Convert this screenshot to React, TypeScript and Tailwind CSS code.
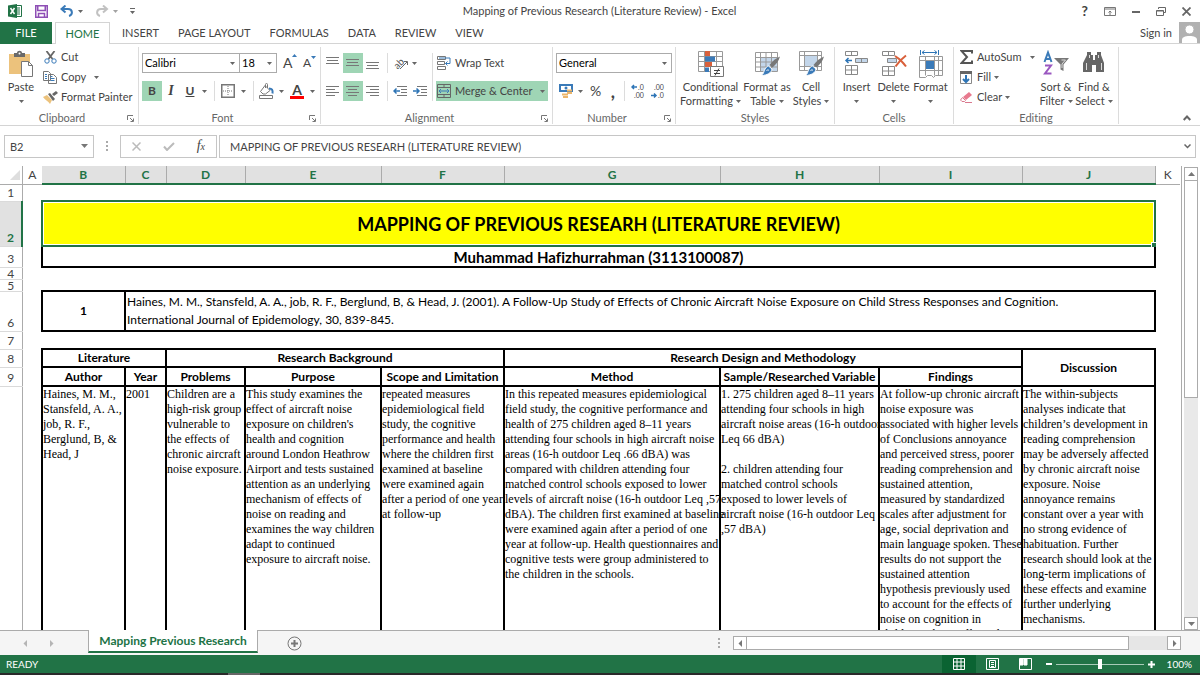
import type { ReactNode } from 'react'
import { clsx } from 'clsx'

const tabs = ['INSERT', 'PAGE LAYOUT', 'FORMULAS', 'DATA', 'REVIEW', 'VIEW']

const columns = [
  { name: 'A', width: 'w-[20px]' },
  { name: 'B', width: 'w-[83px]' },
  { name: 'C', width: 'w-[41px]' },
  { name: 'D', width: 'w-[79px]' },
  { name: 'E', width: 'w-[136px]' },
  { name: 'F', width: 'w-[123px]' },
  { name: 'G', width: 'w-[216px]' },
  { name: 'H', width: 'w-[159px]' },
  { name: 'I', width: 'w-[143px]' },
  { name: 'J', width: 'w-[133px]' },
  { name: 'K', width: 'w-[25px]' },
]

const study = [
  'Haines, M. M.,\nStansfeld, A. A.,\njob, R. F.,\nBerglund, B, &\nHead, J',
  '2001',
  'Children are a\nhigh-risk group\nvulnerable to\nthe effects of\nchronic aircraft\nnoise exposure.',
  "This study examines the\neffect of aircraft noise\nexposure on children's\nhealth and cognition\naround London Heathrow\nAirport and tests sustained\nattention as an underlying\nmechanism of effects of\nnoise on reading and\nexamines the way children\nadapt to continued\nexposure to aircraft noise.",
  'repeated measures\nepidemiological field\nstudy, the cognitive\nperformance and health\nwhere the children first\nexamined at baseline\nwere examined again\nafter a period of one year\nat follow-up',
  'In this repeated measures epidemiological\nfield study, the cognitive performance and\nhealth of 275 children aged 8–11 years\nattending four schools in high aircraft noise\nareas (16-h outdoor Leq .66 dBA) was\ncompared with children attending four\nmatched control schools exposed to lower\nlevels of aircraft noise (16-h outdoor Leq ,57\ndBA). The children first examined at baseline\nwere examined again after a period of one\nyear at follow-up. Health questionnaires and\ncognitive tests were group administered to\nthe children in the schools.',
  '1. 275 children aged 8–11 years\nattending four schools in high\naircraft noise areas (16-h outdoor\nLeq 66 dBA)\n\n2. children attending four\nmatched control schools\nexposed to lower levels of\naircraft noise (16-h outdoor Leq\n,57 dBA)',
  'At follow-up chronic aircraft\nnoise exposure was\nassociated with higher levels\nof Conclusions annoyance\nand perceived stress, poorer\nreading comprehension and\nsustained attention,\nmeasured by standardized\nscales after adjustment for\nage, social deprivation and\nmain language spoken. These\nresults do not support the\nsustained attention\nhypothesis previously used\nto account for the effects of\nnoise on cognition in\nchildren. The small number',
  'The within-subjects\nanalyses indicate that\nchildren’s development in\nreading comprehension\nmay be adversely affected\nby chronic aircraft noise\nexposure. Noise\nannoyance remains\nconstant over a year with\nno strong evidence of\nhabituation. Further\nresearch should look at the\nlong-term implications of\nthese effects and examine\nfurther underlying\nmechanisms.',
]

const subHeads = ['Author', 'Year', 'Problems', 'Purpose', 'Scope and Limitation', 'Method', 'Sample/Researched Variable', 'Findings']

function Caret({ className }: { className?: string }) {
  return (
    <svg width="5" height="3" viewBox="0 0 5 3" className={clsx('shrink-0', className)}>
      <path d="M0 0h5L2.5 3z" fill="#666" />
    </svg>
  )
}

function Divider() {
  return <span className="h-5 w-px shrink-0 bg-[#dcdcdc]" />
}

function Group({ label, width, launcher, children }: { label: string; width: string; launcher?: boolean; children: ReactNode }) {
  return (
    <section aria-label={label} className={clsx('relative mt-[3px] mb-px flex shrink-0 flex-col border-r border-[#dcdcdc]', width)}>
      <div className="min-h-0 flex-1">{children}</div>
      <div className={clsx('flex h-3 items-center justify-center text-[#666]', launcher && 'pr-[14px]')}>{label}</div>
      {launcher && (
        <button aria-label={`${label} settings`} className="absolute right-1 bottom-[2px]">
          <svg width="7" height="7" viewBox="0 0 7 7" fill="none" stroke="#777">
            <path d="M.5 5V.5H6M3 3l3 3M6.500 3.500v3h-3" />
          </svg>
        </button>
      )}
    </section>
  )
}

function SmallButton({ icon, label, caret }: { icon: ReactNode; label: string; caret?: string }) {
  return (
    <button className="flex h-5 items-center whitespace-nowrap">
      <span className="mr-[3px] flex w-4 shrink-0 justify-center">{icon}</span>
      {label}
      {caret && <Caret className={caret} />}
    </button>
  )
}

function BigButton({ icon, first, second, width }: { icon: ReactNode; first: string; second?: string; width: string }) {
  return (
    <button className={clsx('flex shrink-0 flex-col items-center pt-[3px]', width)}>
      <span className="flex h-[30px] items-start justify-center">{icon}</span>
      <span className="leading-[14px] whitespace-nowrap">{first}</span>
      <span className="flex h-[14px] items-center leading-[14px] whitespace-nowrap">
        {second}
        <Caret className={second ? 'ml-[3px]' : ''} />
      </span>
    </button>
  )
}

function Lines({ rows, y = 2 }: { rows: [number, number][]; y?: number }) {
  return (
    <svg width="14" height="14" viewBox="0 0 14 14" stroke="#777">
      {rows.map(([from, to], i) => (
        <path key={i} d={`M${from} ${y + i * 3 + 0.5}H${to}`} />
      ))}
    </svg>
  )
}

const topAlign: [number, number][] = [[0, 13], [1, 12], [0, 13]]
const leftAlign: [number, number][] = [[0, 13], [0, 9], [0, 13], [0, 9]]
const centerAlign: [number, number][] = [[0, 13], [2, 11], [0, 13], [2, 11]]
const rightAlign: [number, number][] = [[0, 13], [4, 13], [0, 13], [4, 13]]

function Brush() {
  return (
    <>
      <path d="M26 6.500c-1 4-4 8-7.500 11l-3-2.500C18.500 11 22 8 26 6.500z" fill="#777" />
      <path d="M14.500 16l3.500 3c-.5 4-5 6.500-11 6.500 3-1.500 2.500-4 4-6.500 1-1.700 2-2.600 3.500-3z" fill="#3a7ab8" stroke="#fff" />
      <path d="M12.500 20.500c1-.8 2-.6 2.500 0" stroke="#fff" fill="none" />
    </>
  )
}

function PasteIcon() {
  return (
    <svg width="26" height="28" viewBox="0 0 26 28">
      <path d="M1 4h21v20H1z" fill="#ecc27c" />
      <path d="M6 3h3c0-3 5-3 5 0h3v4H6z" fill="#6a6a6a" />
      <circle cx="11.500" cy="3.500" r="1" fill="#fff" />
      <path d="M13.500 11.500h7l4 4v11h-11z" fill="#fff" stroke="#777" />
      <path d="M20.500 11.500v4h4" fill="none" stroke="#777" />
    </svg>
  )
}

function ConditionalIcon() {
  return (
    <svg width="27" height="28" viewBox="0 0 27 28" fill="none">
      <path d="M1.500 1.500h24v20h-24zM1.500 6.500h24M1.500 11.500h24M1.500 16.500h24M7.500 1.500v20M19.500 1.500v20" stroke="#999" />
      <path d="M8 1h5v5H8zM8 12h7v5H8z" fill="#d9603b" />
      <path d="M8 6.500h10v5H8zM8 17.500h4V22H8z" fill="#3a7ab8" />
      <path d="M13.500 16.500h13v10h-13z" fill="#fff" stroke="#777" />
      <path d="M17 20.500h6M17 23.500h6M22 18.500l-4 7" stroke="#444" />
    </svg>
  )
}

function FormatTableIcon() {
  return (
    <svg width="27" height="28" viewBox="0 0 27 28" fill="none">
      <path d="M7 7h16v14H7z" fill="#c3d6ea" />
      <path d="M1.500 2.500h22v19h-22zM1.500 7.500h22M1.500 12h22M1.500 17h22M6.500 2.500v19M12 2.500v19M17.500 2.500v19" stroke="#999" />
      <Brush />
    </svg>
  )
}

function CellStylesIcon() {
  return (
    <svg width="27" height="28" viewBox="0 0 27 28" fill="none">
      <path d="M7 6h13v10H7z" fill="#c3d6ea" />
      <path d="M1.500 1.500h22v19h-22zM1.500 5.500h22M1.500 16.500h22M6.500 1.500v19M19.500 1.500v19" stroke="#999" />
      <Brush />
    </svg>
  )
}

function InsertIcon() {
  return (
    <svg width="25" height="28" viewBox="0 0 25 28" fill="none" stroke="#888">
      <path d="M1.500 1.500h12v4h-12zM7.500 1.500v4M1.500 15.500h12v9h-12zM7.500 15.500v9M1.500 20h12" />
      <path d="M11.500 8.500h12v4h-12zM17.500 8.500v4" fill="#c3d6ea" />
      <path d="M8 10.500H2M4.500 8L2 10.500 4.500 13" stroke="#2e75b6" strokeWidth="1.500" />
    </svg>
  )
}

function DeleteIcon() {
  return (
    <svg width="26" height="28" viewBox="0 0 26 28" fill="none" stroke="#888">
      <path d="M1.500 1.500h12v4h-12zM7.500 1.500v4M1.500 16.500h12v9h-12zM7.500 16.500v9M1.500 21h12" />
      <path d="M6.500 8.500h9v4h-9z" fill="#c3d6ea" />
      <path d="M14 6c4 2.500 8 6 11 10.500M25 5.500c-4 3-8 7-10.500 11" stroke="#d9603b" strokeWidth="2" />
    </svg>
  )
}

function FormatIcon() {
  return (
    <svg width="26" height="28" viewBox="0 0 26 28" fill="none">
      <path d="M2.500 0v5M20.500 0v5M4 2.500h15M6.500 0.500L4 2.500l2.500 2M16.500 0.500l2.500 2-2.500 2" stroke="#2e75b6" />
      <path d="M1.500 6.500h23v19h-7l-2 2-2-2h-4l-2 2h-6zM1.500 10.500h23M1.500 20.500h23M7.500 6.500v19M16.500 6.500v19M20.500 6.500v19" stroke="#999" />
      <path d="M8 11h8v8H8z" fill="#3a7ab8" />
    </svg>
  )
}

function Ribbon() {
  return (
    <div className="flex h-[82px] border-b border-[#d4d4d4] text-[#444]">
      <Group label="Clipboard" width="w-[139px]" launcher>
        <div className="flex">
          <BigButton icon={<PasteIcon />} first="Paste" width="w-[42px]" />
          <div className="flex flex-col">
            <SmallButton
              label="Cut"
              icon={
                <svg width="13" height="13" viewBox="0 0 13 13" fill="none">
                  <path d="M2.500 0l6 8M10.500 0l-6 8" stroke="#666" strokeWidth="1.800" />
                  <circle cx="3" cy="10" r="2.200" stroke="#3a7ab8" />
                  <circle cx="10" cy="10" r="2.200" stroke="#3a7ab8" />
                </svg>
              }
            />
            <SmallButton
              label="Copy"
              caret="ml-2"
              icon={
                <svg width="14" height="13" viewBox="0 0 14 13" fill="#fff" stroke="#777">
                  <path d="M.5.500h5l2 2v7h-7zM5.500 3.500h5l3 3v6h-8z" />
                  <path d="M2 3.500h2M2 5.500h2M2 7.500h2M7.500 7.500h4M7.500 9.500h4M7.500 5.500h2" stroke="#3a7ab8" />
                </svg>
              }
            />
            <SmallButton
              label="Format Painter"
              icon={
                <svg width="15" height="13" viewBox="0 0 15 13">
                  <path d="M0 6l4-2 5 5-2 4C5 10 2 9 0 6z" fill="#ecc27c" />
                  <path d="M5 3l2-1 5 6-2 2zM9 3l4-3 2 2-4 3z" fill="#666" />
                </svg>
              }
            />
          </div>
        </div>
      </Group>

      <Group label="Font" width="w-[182px]" launcher>
        <div className="flex flex-col gap-2 pt-[6px] pl-[3px]">
          <div className="flex h-5 items-center">
            <div className="relative h-5 w-[98px] border border-[#ababab] text-black">
              <select aria-label="Font name" className="size-full appearance-none pl-[2px]">
                <option>Calibri</option>
              </select>
              <Caret className="pointer-events-none absolute top-2 right-1" />
            </div>
            <div className="relative -ml-px h-5 w-[38px] border border-[#ababab] text-black">
              <select aria-label="Font size" className="size-full appearance-none pl-[2px]">
                <option>18</option>
              </select>
              <Caret className="pointer-events-none absolute top-2 right-1" />
            </div>
            <button aria-label="Increase font size" className="ml-[6px] flex w-4 items-start text-sm">
              A<svg width="5" height="3" viewBox="0 0 5 3" className="mt-px shrink-0"><path d="M0 3h5L2.500 0z" fill="#3a7ab8" /></svg>
            </button>
            <button aria-label="Decrease font size" className="ml-1 flex w-4 items-start text-xs">
              A<svg width="5" height="3" viewBox="0 0 5 3" className="mt-px shrink-0"><path d="M0 0h5L2.500 3z" fill="#3a7ab8" /></svg>
            </button>
          </div>
          <div className="flex h-5 items-center">
            <button className="h-5 w-5 bg-[#9fd5b5] text-xs font-bold">B</button>
            <button className="w-[18px] font-['Liberation_Serif',serif] text-sm font-bold italic">I</button>
            <button className="w-5 text-xs font-bold underline">U</button>
            <Caret className="mr-[7px] ml-[2px]" />
            <Divider />
            <button aria-label="Borders" className="ml-[6px] flex items-center gap-[6px]">
              <svg width="14" height="14" viewBox="0 0 14 14" fill="none" stroke="#777">
                <path d="M.75.750h12.500v12.500H.75z" strokeWidth="1.500" />
                <path d="M7 2v10M2 7h10" strokeDasharray="1 1" />
              </svg>
              <Caret />
            </button>
            <span className="w-[7px]" />
            <Divider />
            <button aria-label="Fill color" className="ml-[5px] flex items-center gap-[5px]">
              <svg width="15" height="16" viewBox="0 0 15 16" fill="none" stroke="#777">
                <path d="M6 2.500l5 5-4.500 3.500H4L1.500 8.500zM6.500 5V1.500c0-1.500 2-1.500 2 0V5" />
                <path d="M10 5.500c3 0 4 1.500 3.500 5" stroke="#3a7ab8" strokeWidth="2" />
                <path d="M.5 12.500h13v3H.500z" fill="#fff" />
              </svg>
              <Caret />
            </button>
            <button aria-label="Font color" className="ml-[6px] flex items-center gap-[6px]">
              <span className="flex w-[14px] flex-col items-center border-b-[3px] border-[#ff0000] text-sm leading-[13px] font-bold">A</span>
              <Caret />
            </button>
          </div>
        </div>
      </Group>

      <Group label="Alignment" width="w-[232px]" launcher>
        <div className="flex pt-[6px] pl-[2px]">
          <div className="flex flex-col gap-2">
            <div className="flex h-5 items-center">
              <button aria-label="Top align" className="flex size-5 items-center justify-center"><Lines rows={topAlign} y={1} /></button>
              <button aria-label="Middle align" className="flex size-5 items-center justify-center bg-[#9fd5b5]"><Lines rows={topAlign} y={3} /></button>
              <button aria-label="Bottom align" className="flex size-5 items-center justify-center"><Lines rows={topAlign} y={6} /></button>
              <span className="w-1" />
              <Divider />
              <button aria-label="Orientation" className="ml-[6px] flex items-center gap-[3px]">
                <svg width="15" height="15" viewBox="0 0 15 15" className="overflow-visible">
                  <text x="0" y="11" fontSize="10" fill="#555" transform="rotate(-45 5 8)">ab</text>
                  <path d="M6 13l7-7M10 5.500h3.500V9" stroke="#666" fill="none" />
                </svg>
                <Caret />
              </button>
            </div>
            <div className="flex h-5 items-center">
              <button aria-label="Align left" className="flex size-5 items-center justify-center"><Lines rows={leftAlign} /></button>
              <button aria-label="Center" className="flex size-5 items-center justify-center bg-[#9fd5b5]"><Lines rows={centerAlign} /></button>
              <button aria-label="Align right" className="flex size-5 items-center justify-center"><Lines rows={rightAlign} /></button>
              <span className="w-1" />
              <Divider />
              <button aria-label="Decrease indent" className="ml-[5px]">
                <svg width="15" height="10" viewBox="0 0 15 10" fill="none" stroke="#777">
                  <path d="M4 .5h10M8 3.500h6M8 6.500h6M4 9.500h10" />
                  <path d="M7 5H1M3.500 2.500L1 5l2.500 2.500" stroke="#2e75b6" strokeWidth="1.500" />
                </svg>
              </button>
              <button aria-label="Increase indent" className="ml-[5px]">
                <svg width="15" height="10" viewBox="0 0 15 10" fill="none" stroke="#777">
                  <path d="M4 .5h10M8 3.500h6M8 6.500h6M4 9.500h10" />
                  <path d="M0 5h6M3.500 2.500L6 5 3.500 7.500" stroke="#2e75b6" strokeWidth="1.500" />
                </svg>
              </button>
            </div>
          </div>
          <span className="ml-1 h-12 w-px bg-[#dcdcdc]" />
          <div className="ml-[3px] flex flex-col gap-2">
            <SmallButton
              label="Wrap Text"
              icon={
                <svg width="14" height="14" viewBox="0 0 14 14" fill="none" stroke="#777">
                  <path d="M.5.500h8v3h-8zM.5 5.500h7v3h-7zM.5 10.500h8v3h-8z" />
                  <path d="M2 2h11v5.500H8.500M10.500 5.500l-2 2 2 2" stroke="#3a7ab8" />
                </svg>
              }
            />
            <div className="w-[112px] bg-[#9fd5b5]">
              <SmallButton
                label="Merge & Center"
                caret="ml-2"
                icon={
                  <svg width="14" height="14" viewBox="0 0 14 14" fill="none" stroke="#666">
                    <path d="M.5.500h13v13H.500zM.5 3.500h13M.5 10.500h13M7 .5v3M7 10.500v3" />
                    <path d="M2 7h10M4 5L2 7l2 2M10 5l2 2-2 2" stroke="#3a7ab8" />
                  </svg>
                }
              />
            </div>
          </div>
        </div>
      </Group>

      <Group label="Number" width="w-[123px]" launcher>
        <div className="flex flex-col gap-2 px-[3px] pt-[6px]">
          <div className="relative h-5 border border-[#ababab] text-black">
            <select aria-label="Number format" className="size-full appearance-none pl-[2px]">
              <option>General</option>
            </select>
            <Caret className="pointer-events-none absolute top-2 right-1" />
          </div>
          <div className="flex h-5 items-center pl-[3px]">
            <button aria-label="Accounting format" className="flex items-center gap-[5px]">
              <svg width="14" height="14" viewBox="0 0 14 14" fill="none">
                <path d="M1 1h12v6H1z" stroke="#3a7ab8" strokeWidth="2" />
                <circle cx="7" cy="4" r="1.500" fill="#3a7ab8" />
                <path d="M8 6.500h5M8 9h5M3 10.500h6M4 13h5" stroke="#ecb56a" strokeWidth="2" />
              </svg>
              <Caret />
            </button>
            <button className="ml-[7px] text-sm">%</button>
            <button className="ml-[9px] h-5 w-[5px] text-lg leading-3 font-bold">,</button>
            <span className="ml-[9px] flex"><Divider /></span>
            <button aria-label="Increase decimal" className="ml-[6px]">
              <svg width="15" height="18" viewBox="0 0 15 18">
                <path d="M6 5H1M3 3L1 5l2 2" stroke="#2e75b6" strokeWidth="1.500" fill="none" />
                <text x="7" y="8" fontSize="7" fill="#444">.0</text>
                <text x="3" y="16" fontSize="7" fill="#444">.00</text>
              </svg>
            </button>
            <button aria-label="Decrease decimal" className="ml-[5px]">
              <svg width="15" height="18" viewBox="0 0 15 18">
                <text x="3" y="8" fontSize="7" fill="#444">.00</text>
                <path d="M0 13.500h5M3 11.500l2 2-2 2" stroke="#2e75b6" strokeWidth="1.500" fill="none" />
                <text x="7" y="16" fontSize="7" fill="#444">.0</text>
              </svg>
            </button>
          </div>
        </div>
      </Group>

      <Group label="Styles" width="w-[159px]">
        <div className="flex pl-1">
          <BigButton icon={<ConditionalIcon />} first="Conditional" second="Formatting" width="w-[61px]" />
          <BigButton icon={<FormatTableIcon />} first="Format as" second="Table" width="w-[52px]" />
          <BigButton icon={<CellStylesIcon />} first="Cell" second="Styles" width="w-[36px]" />
        </div>
      </Group>

      <Group label="Cells" width="w-[119px]">
        <div className="flex pl-[3px]">
          <BigButton icon={<InsertIcon />} first="Insert" width="w-[37px]" />
          <BigButton icon={<DeleteIcon />} first="Delete" width="w-[37px]" />
          <BigButton icon={<FormatIcon />} first="Format" width="w-[37px]" />
        </div>
      </Group>

      <Group label="Editing" width="w-[165px]">
        <div className="flex">
          <div className="flex w-[83px] flex-col pl-1">
            <SmallButton
              label="AutoSum"
              caret="ml-[9px]"
              icon={
                <svg width="13" height="14" viewBox="0 0 13 14" fill="none" stroke="#555" strokeWidth="2">
                  <path d="M12 3.500V1H1.500l5.500 6-5.500 6H12v-2.500" />
                </svg>
              }
            />
            <SmallButton
              label="Fill"
              caret="ml-[3px]"
              icon={
                <svg width="12" height="13" viewBox="0 0 12 13" fill="none" stroke="#888">
                  <path d="M.5.500h11v12H.500z" />
                  <path d="M0 1.500h12" stroke="#666" strokeWidth="3" />
                  <path d="M6 4v7M3 8l3 3 3-3" stroke="#2e75b6" strokeWidth="2" />
                </svg>
              }
            />
            <SmallButton
              label="Clear"
              caret="ml-[3px]"
              icon={
                <svg width="13" height="12" viewBox="0 0 13 12">
                  <path d="M3 6l6-5 3 3-6 5z" fill="#e8798e" />
                  <path d="M2.500 6.500l3 3-1 1H2L.5 9zM5 11.500h7" fill="#fff" stroke="#d9798e" />
                </svg>
              }
            />
          </div>
          <BigButton
            first="Sort &"
            second="Filter"
            width="w-[38px]"
            icon={
              <svg width="26" height="28" viewBox="0 0 26 28" fill="none">
                <path d="M1.500 12L5 2.500 8.500 12M2.800 9h4.400" stroke="#3a7ab8" strokeWidth="2" />
                <path d="M2 15.500h6l-6 8h6.500" stroke="#9a57c0" strokeWidth="2" />
                <path d="M11 8h15l-5.500 6.500V21l-3-1.500v-5z" fill="#777" />
                <path d="M18.500 10h4l-3.500 4v4" stroke="#ddd" />
              </svg>
            }
          />
          <BigButton
            first="Find &"
            second="Select"
            width="w-[38px]"
            icon={
              <svg width="24" height="24" viewBox="0 0 24 24" fill="#666">
                <path d="M5 2h4v3h2v5h2V5h2V2h4v3l3 8v9h-8v-7h-4v7H1v-9l4-8z" />
                <path d="M4.500 13v7M19.500 13v7M7.500 5v3M16.500 5v3" stroke="#ddd" />
              </svg>
            }
          />
        </div>
      </Group>

      <div className="flex flex-1 items-end justify-end pr-[9px] pb-1">
        <button aria-label="Collapse ribbon">
          <svg width="8" height="6" viewBox="0 0 8 6" fill="none" stroke="#666" strokeWidth="2">
            <path d="M.7 5L4 1.500 7.300 5" />
          </svg>
        </button>
      </div>
    </div>
  )
}

function TitleBar() {
  return (
    <header className="flex h-[22px] items-center text-[#444]">
      <div className="flex flex-1 items-center pl-2">
        <svg width="14" height="14" viewBox="0 0 14 14">
          <path d="M8 1.500h5.500v11H8" fill="#fff" stroke="#217346" />
          <path d="M9 4h3M9 6h3M9 8h3M9 10h3" stroke="#217346" />
          <path d="M0 1.500L9 0v14L0 12.500z" fill="#217346" />
          <path d="M2.500 4l4 6M6.500 4l-4 6" stroke="#fff" strokeWidth="1.500" />
        </svg>
        <button aria-label="Save" className="ml-[13px]">
          <svg width="13" height="13" viewBox="0 0 13 13" fill="none" stroke="#8e4fb5" strokeWidth="1.500">
            <path d="M.75.750h11.500v11.500H.75zM2.750 1v4.500h7.500V1M3.500 12V8.500h6V12" />
          </svg>
        </button>
        <button aria-label="Undo" className="ml-3 flex items-center gap-1">
          <svg width="14" height="12" viewBox="0 0 14 12" fill="none" stroke="#3a7ab8" strokeWidth="2">
            <path d="M5.500.5L1.500 4l4 3.500M2 4h6c5 0 5 6 1 7" />
          </svg>
          <Caret />
        </button>
        <button aria-label="Redo" className="ml-3 flex items-center gap-1 opacity-60">
          <svg width="14" height="12" viewBox="0 0 14 12" fill="none" stroke="#999" strokeWidth="2">
            <path d="M8 .5L12 4 8 7.500M12 4H6C1 4 1 10 5 11" />
          </svg>
          <Caret />
        </button>
        <button aria-label="Customize toolbar" className="ml-3">
          <svg width="5" height="6" viewBox="0 0 5 6"><path d="M0 0h5v1H0zM0 3h5L2.500 6z" fill="#666" /></svg>
        </button>
      </div>
      <h1>Mapping of Previous Research (Literature Review) - Excel</h1>
      <div className="flex flex-1 items-center justify-end gap-4 pr-[9px]">
        <button className="text-sm leading-5 font-bold">?</button>
        <button aria-label="Ribbon display options">
          <svg width="12" height="9" viewBox="0 0 12 9" fill="none" stroke="#777">
            <path d="M.5.500h11v8H.500zM.5 2h11M6 8V4M4.500 5.500L6 4l1.500 1.500" />
          </svg>
        </button>
        <button aria-label="Minimize" className="flex h-3 w-2 items-end pb-1"><span className="h-[2px] w-2 bg-[#666]" /></button>
        <button aria-label="Restore">
          <svg width="10" height="9" viewBox="0 0 10 9" fill="none" stroke="#666">
            <path d="M2.500 2V.5h7v5H8M.5 3.500h7v5h-7zM.5 4h7" />
          </svg>
        </button>
        <button aria-label="Close">
          <svg width="9" height="9" viewBox="0 0 9 9" stroke="#666" strokeWidth="1.800">
            <path d="M.5.500l8 8M8.500.500l-8 8" />
          </svg>
        </button>
      </div>
    </header>
  )
}

function TabBar() {
  return (
    <nav className="flex h-[22px] items-stretch text-[#444]">
      <button className="w-[52px] bg-[#217346] text-white">FILE</button>
      <span className="w-[3px] border-b border-[#d4d4d4]" />
      <button className="w-[55px] border border-b-0 border-[#d4d4d4] text-[#217346]">HOME</button>
      <div className="flex flex-1 items-center gap-[19px] border-b border-[#d4d4d4] pl-3">
        {tabs.map((tab) => (
          <button key={tab}>{tab}</button>
        ))}
        <div className="ml-auto flex h-full items-center gap-[7px]">
          <button>Sign in</button>
          <svg width="21" height="21" viewBox="0 0 21 21">
            <path d="M0 0h21v21H0z" fill="#b1b1b1" />
            <path d="M3 21v-3c0-3 3-4 7.500-4s7.500 1 7.500 4v3z" fill="#fff" />
            <circle cx="10.500" cy="7.500" r="4.500" fill="#fff" stroke="#b1b1b1" />
          </svg>
        </div>
      </div>
    </nav>
  )
}

function FormulaBar() {
  return (
    <div className="flex h-10 items-center px-1 text-[#444]">
      <div className="relative h-[23px] w-[90px] border border-[#c6c6c6]">
        <input aria-label="Name box" defaultValue="B2" className="size-full pl-[5px]" />
        <svg width="7" height="4" viewBox="0 0 7 4" className="absolute top-2 right-[5px]"><path d="M0 0h7L3.500 4z" fill="#777" /></svg>
      </div>
      <Dots className="mx-3" />
      <div className="flex h-[23px] w-[97px] items-center justify-around border border-[#c6c6c6]">
        <button aria-label="Cancel">
          <svg width="9" height="9" viewBox="0 0 9 9" stroke="#bbb" strokeWidth="1.500"><path d="M.5.500l8 8M8.500.500l-8 8" /></svg>
        </button>
        <button aria-label="Enter">
          <svg width="12" height="9" viewBox="0 0 12 9" fill="none" stroke="#bbb" strokeWidth="2"><path d="M1 4.500L4 8l7-7" /></svg>
        </button>
        <button className="font-['Liberation_Serif',serif] text-sm leading-4 italic">
          f<span className="text-[10px]">x</span>
        </button>
      </div>
      <div className="relative ml-[2px] h-[23px] flex-1 border border-[#c6c6c6]">
        <input aria-label="Formula" defaultValue="MAPPING OF PREVIOUS RESEARH (LITERATURE REVIEW)" className="size-full pl-[10px]" />
        <svg width="7" height="5" viewBox="0 0 7 5" fill="none" stroke="#666" strokeWidth="1.500" className="absolute top-2 right-1"><path d="M.5.500l3 3 3-3" /></svg>
      </div>
    </div>
  )
}

function Dots({ className }: { className?: string }) {
  return (
    <svg width="2" height="10" viewBox="0 0 2 10" className={clsx('shrink-0', className)}>
      <path d="M0 0h2v2H0zM0 4h2v2H0zM0 8h2v2H0z" fill="#aaa" />
    </svg>
  )
}

function RowHead({ n, selected, short }: { n: number; selected?: boolean; short?: boolean }) {
  return (
    <th
      scope="row"
      className={clsx(
        'overflow-hidden border-b border-[#dadada] p-0 align-bottom leading-[11px]',
        !short && 'pb-[3px]',
        selected ? 'border-r-2 border-r-[#217346] bg-[#e1e1e1] font-bold text-[#217346]' : 'border-r border-r-[#ababab] font-normal text-[#444]',
      )}
    >
      {n}
    </th>
  )
}

function Sheet() {
  return (
    <table className="w-[1180px] table-fixed border-collapse text-xs text-black">
      <colgroup>
        <col className="w-[22px]" />
        {columns.map((c) => (
          <col key={c.name} className={c.width} />
        ))}
      </colgroup>
      <thead>
        <tr className="h-[18px] leading-4">
          <th className="border-r border-b border-[#ababab] p-0">
            <svg width="10" height="10" viewBox="0 0 10 10" className="ml-auto mr-[2px]"><path d="M10 0v10H0z" fill="#dedede" /></svg>
          </th>
          {columns.map((c) => (
            <th
              key={c.name}
              className={clsx(
                'p-0',
                c.name === 'A' || c.name === 'K'
                  ? 'border-b border-[#ababab] font-normal text-[#444]'
                  : 'border-r border-b-2 border-r-[#ababab] border-b-[#217346] bg-[#e1e1e1] text-[#217346]',
              )}
            >
              {c.name}
            </th>
          ))}
        </tr>
      </thead>
      <tbody>
        <tr className="h-[17px]">
          <RowHead n={1} />
        </tr>
        <tr className="h-[45px]">
          <RowHead n={2} selected />
          <td />
          <td colSpan={9} className="relative border-2 border-[#217346] bg-[#ffff00] p-0 text-center text-lg leading-6 font-bold outline outline-offset-[-2px] outline-white">
            MAPPING OF PREVIOUS RESEARH (LITERATURE REVIEW)
            <span className="absolute -right-[2px] -bottom-[2px] size-[5px] border-t border-l border-white bg-[#217346]" />
          </td>
        </tr>
        <tr className="h-[21px]">
          <RowHead n={3} />
          <td />
          <td colSpan={9} className="border-2 border-black p-0 text-center text-[15px] leading-4 font-bold">
            Muhammad Hafizhurrahman (3113100087)
          </td>
        </tr>
        <tr className="h-3">
          <RowHead n={4} short />
        </tr>
        <tr className="h-3">
          <RowHead n={5} short />
        </tr>
        <tr className="h-10">
          <RowHead n={6} />
          <td />
          <td className="border-2 border-black p-0 text-center font-bold">1</td>
          <td colSpan={8} className="border-2 border-black p-0 pl-px leading-[18px] whitespace-pre">
            {'Haines, M. M., Stansfeld, A. A., job, R. F., Berglund, B, & Head, J. (2001). A Follow-Up Study of Effects of Chronic Aircraft Noise Exposure on Child Stress Responses and Cognition.\nInternational Journal of Epidemology, 30, 839-845.'}
          </td>
        </tr>
        <tr className="h-[18px]">
          <RowHead n={7} />
        </tr>
        <tr className="h-[18px] leading-4">
          <RowHead n={8} />
          <td />
          <th colSpan={2} className="border-2 border-black p-0">Literature</th>
          <th colSpan={3} className="border-2 border-black p-0">Research Background</th>
          <th colSpan={3} className="border-2 border-black p-0">Research Design and Methodology</th>
          <th rowSpan={2} className="border-2 border-black p-0">Discussion</th>
        </tr>
        <tr className="h-[19px] leading-4">
          <RowHead n={9} />
          <td />
          {subHeads.map((head) => (
            <th key={head} className="overflow-hidden border-2 border-black p-0 whitespace-nowrap">{head}</th>
          ))}
        </tr>
        <tr className="h-[300px] font-['Liberation_Serif',serif] leading-[15px]">
          <RowHead n={10} />
          <td />
          {study.map((text) => (
            <td key={text} className="border-2 border-black p-0 align-top whitespace-pre">{text}</td>
          ))}
        </tr>
      </tbody>
    </table>
  )
}

function Arrow({ d }: { d: string }) {
  return (
    <svg width="7" height="7" viewBox="0 0 7 7">
      <path d={d} fill="#777" />
    </svg>
  )
}

function VerticalScroll() {
  return (
    <div className="flex w-[19px] shrink-0 flex-col border-l border-[#ababab] bg-white px-[2px] pt-px">
      <button aria-label="Scroll up" className="flex h-[14px] w-[14px] shrink-0 items-center justify-center border border-[#ababab]"><Arrow d="M0 5h7L3.500 1z" /></button>
      <div className="w-[14px] flex-1 bg-[#e9e9e9]">
        <div className="-mt-px h-1/2 w-[14px] border border-[#ababab] bg-white" />
      </div>
      <button aria-label="Scroll down" className="flex h-[13px] w-[14px] shrink-0 items-center justify-center border border-[#ababab]"><Arrow d="M0 2h7L3.500 6z" /></button>
    </div>
  )
}

function SheetTabs() {
  return (
    <div className="flex h-[25px] shrink-0 border-t border-[#ababab] bg-[#f5f5f5]">
      <div className="flex w-[88px] items-center gap-[19px] pl-[22px] opacity-50">
        <button aria-label="Previous sheet"><Arrow d="M5 0v7L1.500 3.500z" /></button>
        <button aria-label="Next sheet"><Arrow d="M2 0v7l3.500-3.500z" /></button>
      </div>
      <button className="-mt-px h-[23px] w-[170px] border-x border-b-2 border-x-[#ababab] border-b-[#217346] bg-white text-xs font-bold whitespace-nowrap text-[#217346]">
        Mapping Previous Research
      </button>
      <button aria-label="New sheet" className="ml-[29px]">
        <svg width="15" height="15" viewBox="0 0 15 15" fill="none" stroke="#777">
          <circle cx="7.500" cy="7.500" r="6.500" />
          <path d="M4 7.500h7M7.500 4v7" strokeWidth="2" />
        </svg>
      </button>
      <div className="ml-auto flex items-center pr-[19px]">
        <Dots className="mr-[13px]" />
        <button aria-label="Scroll left" className="flex h-[14px] w-[14px] items-center justify-center border border-[#ababab] bg-white"><Arrow d="M5 0v7L1.500 3.500z" /></button>
        <div className="flex w-[420px] bg-[#e6e6e6]">
          <div className="-ml-px h-[14px] w-[383px] border border-[#ababab] bg-white" />
        </div>
        <button aria-label="Scroll right" className="flex h-[14px] w-[14px] items-center justify-center border border-[#ababab] bg-white"><Arrow d="M2 0v7l3.500-3.500z" /></button>
      </div>
    </div>
  )
}

function StatusBar() {
  return (
    <footer className="shrink-0">
      <div className="flex h-[18px] items-center bg-[#217346] pr-2 pl-[6px] text-[10px] text-white">
        <span>READY</span>
        <button aria-label="Normal view" className="ml-auto flex h-full w-[34px] items-center justify-center bg-[#0a6332]">
          <svg width="12" height="12" viewBox="0 0 12 12" fill="none" stroke="#fff"><path d="M.5.500h11v11H.500zM.5 4h11M.5 8h11M4 .5v11M8 .5v11" /></svg>
        </button>
        <button aria-label="Page layout view" className="flex w-[33px] justify-center">
          <svg width="13" height="12" viewBox="0 0 13 12" fill="none" stroke="#fff"><path d="M.5.500h12v11H.500zM3.500 2.500h6v7h-6zM5 4.500h3M5 6.500h3M5 8.500h3" /></svg>
        </button>
        <button aria-label="Page break preview" className="flex w-[33px] justify-center">
          <svg width="13" height="12" viewBox="0 0 13 12" fill="none" stroke="#fff"><path d="M.5.500h12v11H.500z" /><path d="M1 1h3v6H1zM5 1h3v6H5z" fill="#fff" /></svg>
        </button>
        <button aria-label="Zoom out" className="ml-1 h-[2px] w-[6px] bg-white" />
        <input
          type="range"
          aria-label="Zoom"
          className="mx-1 h-[10px] w-[88px] appearance-none bg-transparent [&::-webkit-slider-runnable-track]:h-px [&::-webkit-slider-runnable-track]:bg-[#a9cbb8] [&::-webkit-slider-thumb]:-mt-[5px] [&::-webkit-slider-thumb]:h-[10px] [&::-webkit-slider-thumb]:w-1 [&::-webkit-slider-thumb]:appearance-none [&::-webkit-slider-thumb]:bg-white"
        />
        <button aria-label="Zoom in">
          <svg width="7" height="7" viewBox="0 0 7 7" stroke="#fff" strokeWidth="2"><path d="M0 3.500h7M3.500 0v7" /></svg>
        </button>
        <button className="w-[37px] text-right">100%</button>
      </div>
      <div className="h-[2px] bg-[#2a2a2a] pl-[228px]">
        <div className="h-full w-8 bg-[#666]" />
      </div>
    </footer>
  )
}

function App() {
  return (
    <div className="flex h-screen flex-col overflow-hidden bg-white font-['Lato',sans-serif] text-[11px] leading-4 [font-variant-ligatures:none]">
      <TitleBar />
      <TabBar />
      <Ribbon />
      <FormulaBar />
      <main className="flex min-h-0 flex-1">
        <div className="min-w-0 flex-1 overflow-hidden">
          <Sheet />
        </div>
        <VerticalScroll />
      </main>
      <SheetTabs />
      <StatusBar />
    </div>
  )
}

export default App
